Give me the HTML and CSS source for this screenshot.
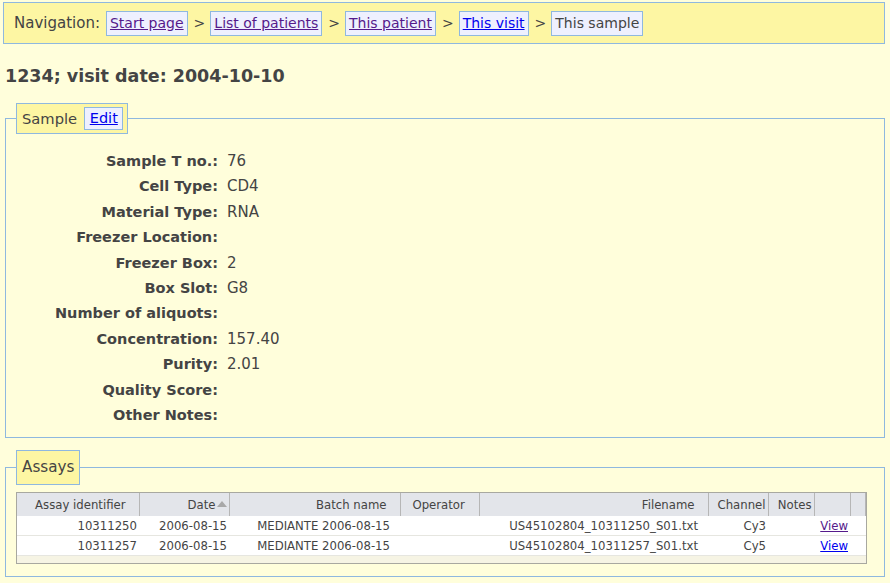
FILE: index.html
```html
<!DOCTYPE html>
<html>
<head>
<meta charset="utf-8">
<link rel="stylesheet" href="styles.css">
</head>
<body>
<div class="page">
  <div class="nav">
    <span class="nav-label">Navigation:</span>
    <span class="crumb"><a class="visited" href="#">Start page</a></span>
    <span class="sep">&gt;</span>
    <span class="crumb"><a class="visited" href="#">List of patients</a></span>
    <span class="sep">&gt;</span>
    <span class="crumb"><a class="visited" href="#">This patient</a></span>
    <span class="sep">&gt;</span>
    <span class="crumb"><a class="link" href="#">This visit</a></span>
    <span class="sep">&gt;</span>
    <span class="crumb current">This sample</span>
  </div>

  <h1 class="title">1234; visit date: 2004-10-10</h1>

  <fieldset class="box sample-box">
    <legend class="legend sample-legend">Sample <span class="crumb edit"><a class="link" href="#">Edit</a></span></legend>
    <div class="props">
      <div class="k">Sample T no.:</div><div class="v">76</div>
      <div class="k">Cell Type:</div><div class="v">CD4</div>
      <div class="k">Material Type:</div><div class="v">RNA</div>
      <div class="k">Freezer Location:</div><div class="v"></div>
      <div class="k">Freezer Box:</div><div class="v">2</div>
      <div class="k">Box Slot:</div><div class="v">G8</div>
      <div class="k">Number of aliquots:</div><div class="v"></div>
      <div class="k">Concentration:</div><div class="v">157.40</div>
      <div class="k">Purity:</div><div class="v">2.01</div>
      <div class="k">Quality Score:</div><div class="v"></div>
      <div class="k">Other Notes:</div><div class="v"></div>
    </div>
  </fieldset>

  <fieldset class="box assays-box">
    <legend class="legend assays-legend">Assays</legend>
    <div class="grid">
      <table class="assays">
        <colgroup>
          <col style="width:122px"><col style="width:90px"><col style="width:171px"><col style="width:79px"><col style="width:229px"><col style="width:60px"><col style="width:46px"><col style="width:36px"><col>
        </colgroup>
        <thead>
          <tr>
            <th>Assay identifier</th>
            <th class="sorted">Date<span class="arrow"></span></th>
            <th>Batch name</th>
            <th class="left">Operator</th>
            <th>Filename</th>
            <th class="tight">Channel</th>
            <th class="tight">Notes</th>
            <th></th>
            <th></th>
          </tr>
        </thead>
        <tbody>
          <tr>
            <td class="c-id">10311250</td>
            <td class="c-date">2006-08-15</td>
            <td class="c-batch">MEDIANTE 2006-08-15</td>
            <td></td>
            <td class="c-file">US45102804_10311250_S01.txt</td>
            <td class="c-chan">Cy3</td>
            <td></td>
            <td class="c-view"><a class="visited" href="#">View</a></td>
            <td></td>
          </tr>
          <tr>
            <td class="c-id">10311257</td>
            <td class="c-date">2006-08-15</td>
            <td class="c-batch">MEDIANTE 2006-08-15</td>
            <td></td>
            <td class="c-file">US45102804_10311257_S01.txt</td>
            <td class="c-chan">Cy5</td>
            <td></td>
            <td class="c-view"><a class="link" href="#">View</a></td>
            <td></td>
          </tr>
        </tbody>
      </table>
      <div class="grid-foot"></div>
    </div>
  </fieldset>
</div>
</body>
</html>
```

FILE: styles.css
```css
html, body {
  margin: 0;
  padding: 0;
  background: #fffedb;
}
body {
  font-family: "DejaVu Sans", Verdana, sans-serif;
  color: #444;
}
.page {
  padding: 2px 5px 0 3px;
}
.nav {
  display: flex;
  align-items: center;
  height: 40px;
  background: #fdf6a3;
  border: 1px solid #8fb8df;
  padding: 0 0 0 10px;
  font-size: 15px;
}
.nav-label {
  margin-right: 6px;
}
.crumb {
  display: inline-block;
  background: #eef0fe;
  border: 1px solid #8fb8df;
  padding: 1px 3px 2px 3px;
  line-height: 20px;
  font-size: 14px;
}
.sep {
  font-size: 14px;
  margin: 0 5px 0 6px;
}
a.visited { color: #551a8b; }
a.link { color: #0000ee; }
.current { color: #444; padding: 1px 3px 2px 3px; }

.title {
  font-size: 17.5px;
  font-weight: bold;
  margin: 21px 0 0 2px;
  line-height: 22px;
}

.box {
  margin: 0 0 0 2px;
  border: 1px solid #8fb8df;
  padding: 0 10px;
}
.sample-box {
  margin-top: 16px;
  padding-bottom: 9px;
}
.legend {
  background: #fdf6a3;
  border: 1px solid #8fb8df;
  font-size: 14.7px;
  padding: 0 5px;
  margin-left: 0;
}
.sample-legend {
  line-height: 29px;
  padding-right: 4px;
}
.edit {
  font-size: 14.5px;
  line-height: 19px;
  padding: 1px 4px 1px 5px;
  margin-left: 2px;
  vertical-align: 1px;
}
.props {
  display: grid;
  grid-template-columns: 202px 1fr;
  column-gap: 9px;
  font-size: 15px;
  line-height: 25.4px;
  margin-top: 15px;
}
.k {
  font-weight: bold;
  text-align: right;
  font-size: 14.5px;
}

.assays-box {
  margin-top: 12px;
  padding-bottom: 12px;
}
.assays-legend {
  line-height: 33px;
  font-size: 15.2px;
}
.grid {
  margin-top: 7px;
  width: 849px;
  border: 1px solid #a8a8a0;
  background: #f6f4e4;
}
.assays {
  border-collapse: collapse;
  table-layout: fixed;
  width: 100%;
  font-size: 11.7px;
}
.assays th {
  background: #e3e5ea;
  font-weight: normal;
  text-align: right;
  height: 23px;
  padding: 0 13px 0 2px;
  border-left: 1px solid #fff;
  border-right: 1px solid #b6b6b6;
  white-space: nowrap;
  overflow: hidden;
  color: #444;
}
.assays th:first-child { border-left: none; }
.assays th.left { text-align: left; padding-left: 12px; }
.assays th.tight { padding-right: 2px; }
.assays th.sorted { padding-right: 2px; }
.arrow {
  display: inline-block;
  width: 0;
  height: 0;
  border-left: 5px solid transparent;
  border-right: 5px solid transparent;
  border-bottom: 6px solid #a8a8a8;
  margin-left: 1px;
  vertical-align: 2px;
}
.assays td {
  background: #fff;
  height: 19px;
  border-bottom: 1px solid #e6e6e0;
  text-align: right;
  padding: 0 2px;
  white-space: nowrap;
  overflow: hidden;
}
.assays td.c-batch { padding-right: 10px; }
.assays td.c-file { padding-right: 10px; }
.assays td.c-chan { padding-right: 2px; }
.assays td.c-view { padding-right: 2px; }
.grid-foot {
  height: 7px;
}
```
